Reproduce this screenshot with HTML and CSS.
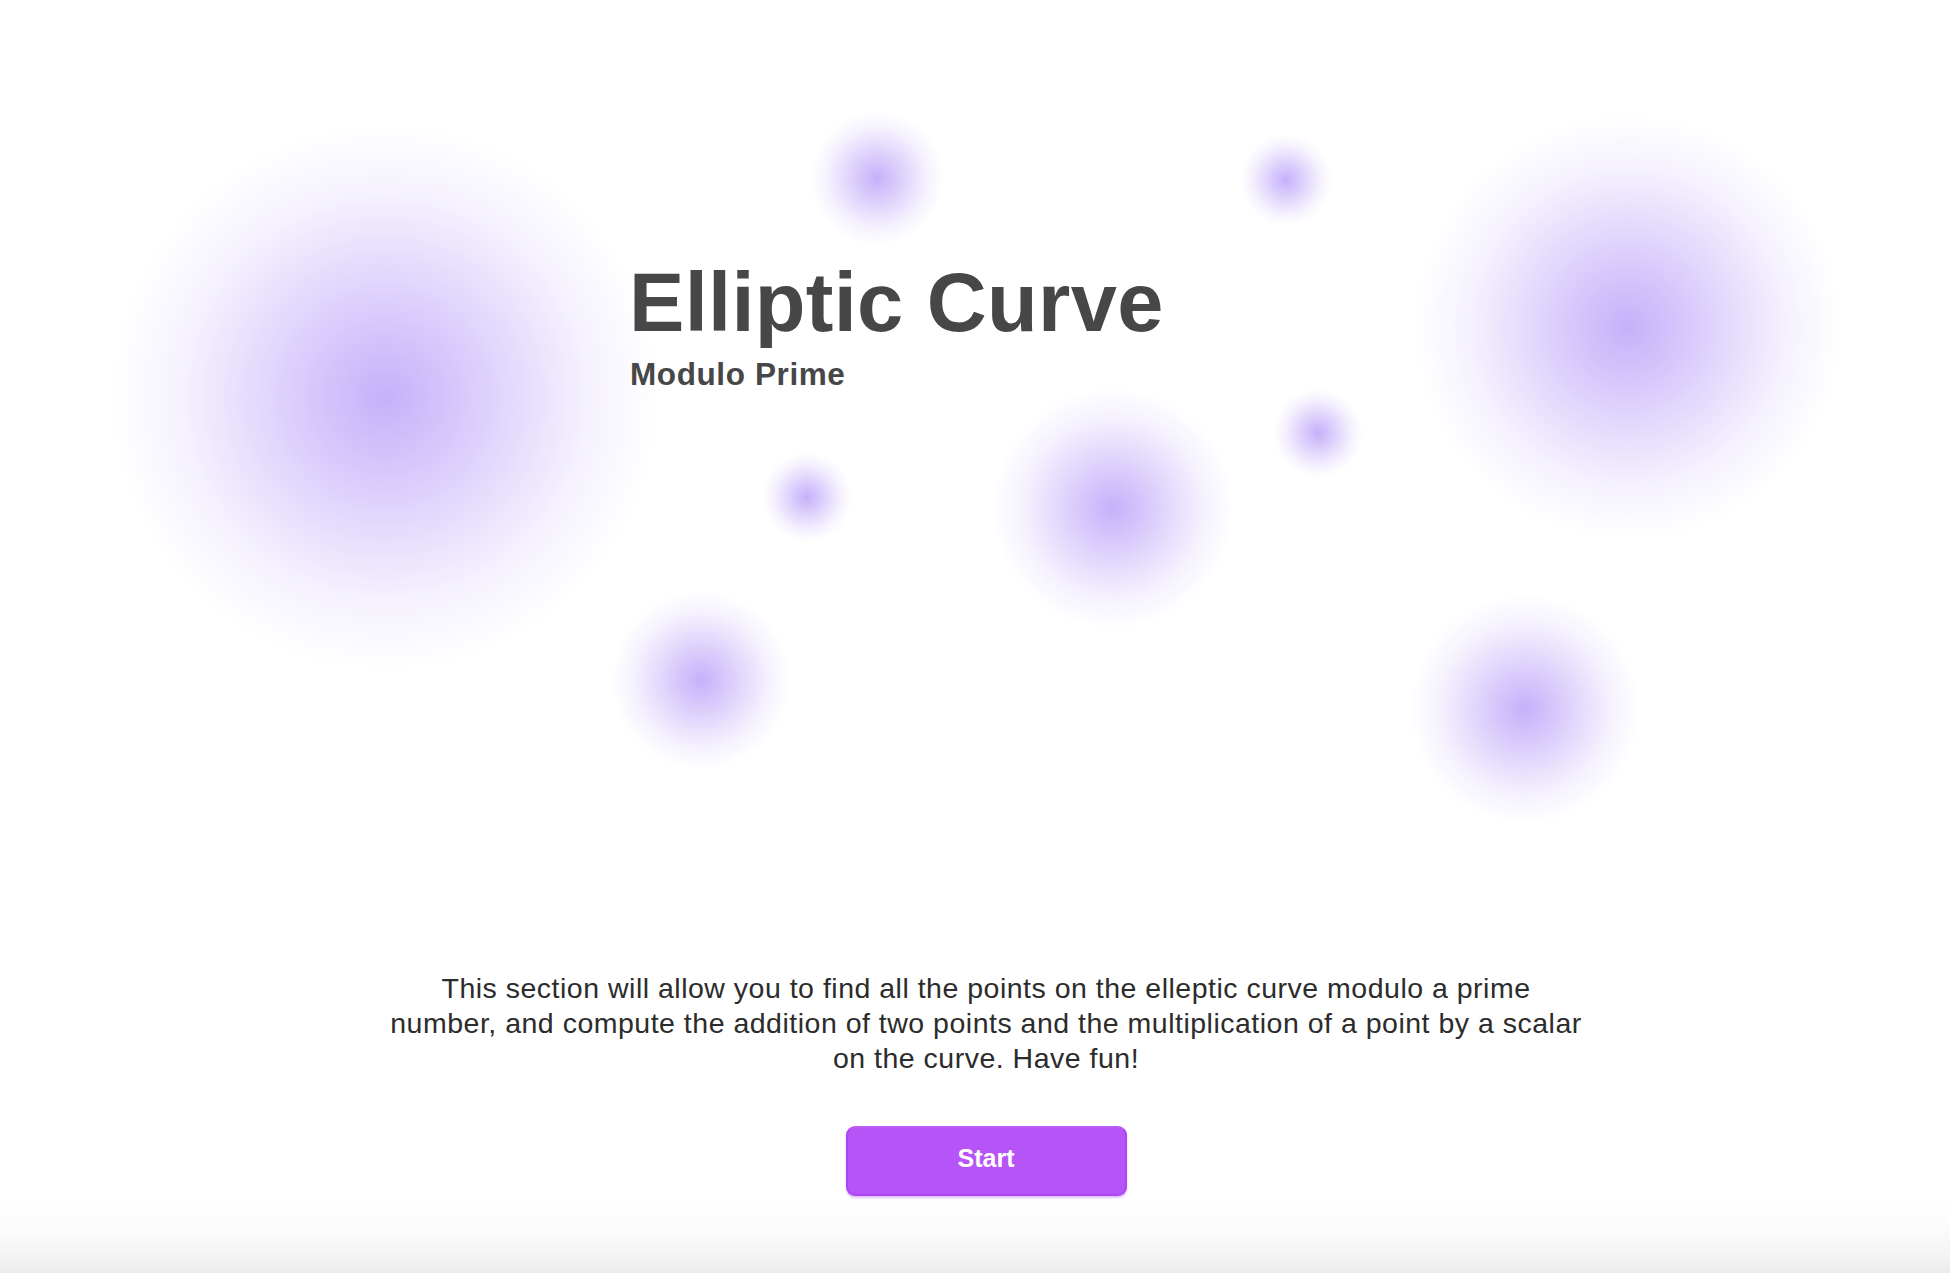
FILE: index.html
```html
<!DOCTYPE html>
<html lang="en">
<head>
<meta charset="utf-8">
<title>Elliptic Curve - Modulo Prime</title>
<link rel="stylesheet" href="styles.css">
</head>
<body>
<div class="blobs" aria-hidden="true">
  <span class="blob b1"></span>
  <span class="blob b2"></span>
  <span class="blob b3"></span>
  <span class="blob b4"></span>
  <span class="blob b5"></span>
  <span class="blob b6"></span>
  <span class="blob b7"></span>
  <span class="blob b8"></span>
  <span class="blob b9"></span>
</div>
<main class="page">
  <header class="hero">
    <h1 class="title">Elliptic Curve</h1>
    <h2 class="subtitle">Modulo Prime</h2>
  </header>
  <section class="intro">
    <p class="intro-text">This section will allow you to find all the points on the elleptic curve modulo a prime number, and compute the addition of two points and the multiplication of a point by a scalar on the curve. Have fun!</p>
    <button class="start-btn" type="button">Start</button>
  </section>
</main>
</body>
</html>
```

FILE: styles.css
```css
html, body {
  height: 100%;
}
body {
  margin: 0;
  position: relative;
  overflow: hidden;
  font-family: "Liberation Sans", Arial, Helvetica, sans-serif;
  background: linear-gradient(to bottom,
    #ffffff 0,
    #ffffff calc(100% - 75px),
    #fcfcfc calc(100% - 45px),
    #f4f4f4 calc(100% - 18px),
    #ebebeb 100%);
}

.blobs {
  position: absolute;
  inset: 0;
  z-index: 0;
  pointer-events: none;
}
.blob {
  position: absolute;
  border-radius: 50%;
  background: radial-gradient(closest-side,
    rgba(145, 105, 245, 0.52) 0%,
    rgba(145, 105, 245, 0.38) 25%,
    rgba(145, 105, 245, 0.23) 50%,
    rgba(145, 105, 245, 0.09) 75%,
    rgba(145, 105, 245, 0) 100%);
}
.b1 { left: 112px; top: 124px; width: 546px; height: 546px; }
.b2 { left: 1415px; top: 114px; width: 426px; height: 426px; }
.b3 { left: 810px; top: 111px; width: 134px; height: 134px; }
.b4 { left: 1240px; top: 134px; width: 92px; height: 92px; }
.b5 { left: 992px; top: 387px; width: 242px; height: 242px; }
.b6 { left: 1273px; top: 388px; width: 90px; height: 90px; }
.b7 { left: 762px; top: 452px; width: 90px; height: 90px; }
.b8 { left: 611px; top: 590px; width: 180px; height: 180px; }
.b9 { left: 1410px; top: 594px; width: 230px; height: 230px; }

.page {
  position: relative;
  z-index: 1;
  display: flex;
  flex-direction: column;
}

.hero {
  display: flex;
  flex-direction: column;
  align-items: flex-start;
  padding: 261px 0 0 629px;
}
.title {
  margin: 0;
  font-size: 83px;
  line-height: 83px;
  font-weight: 700;
  letter-spacing: 0.3px;
  color: #474747;
}
.subtitle {
  margin: 14px 0 0 1px;
  font-size: 31.5px;
  line-height: 32px;
  font-weight: 700;
  letter-spacing: 0.6px;
  color: #474747;
}

.intro {
  display: flex;
  flex-direction: column;
  align-items: center;
  margin: 581px 0 0 22px;
}
.intro-text {
  width: 1198px;
  margin: 0;
  font-size: 28.5px;
  line-height: 35px;
  letter-spacing: 0.5px;
  text-align: center;
  color: #2c2c2c;
}
.start-btn {
  margin-top: 50px;
  width: 281px;
  height: 70px;
  border: 2px solid #ab47f2;
  border-top-color: #b95cf7;
  border-radius: 9px;
  background: #b754f7;
  box-shadow: 0 2px 2px rgba(170, 80, 240, 0.35);
  color: #ffffff;
  font-family: "Liberation Sans", Arial, Helvetica, sans-serif;
  font-size: 25px;
  font-weight: 700;
  padding: 0 0 6px;
  cursor: pointer;
}
```
